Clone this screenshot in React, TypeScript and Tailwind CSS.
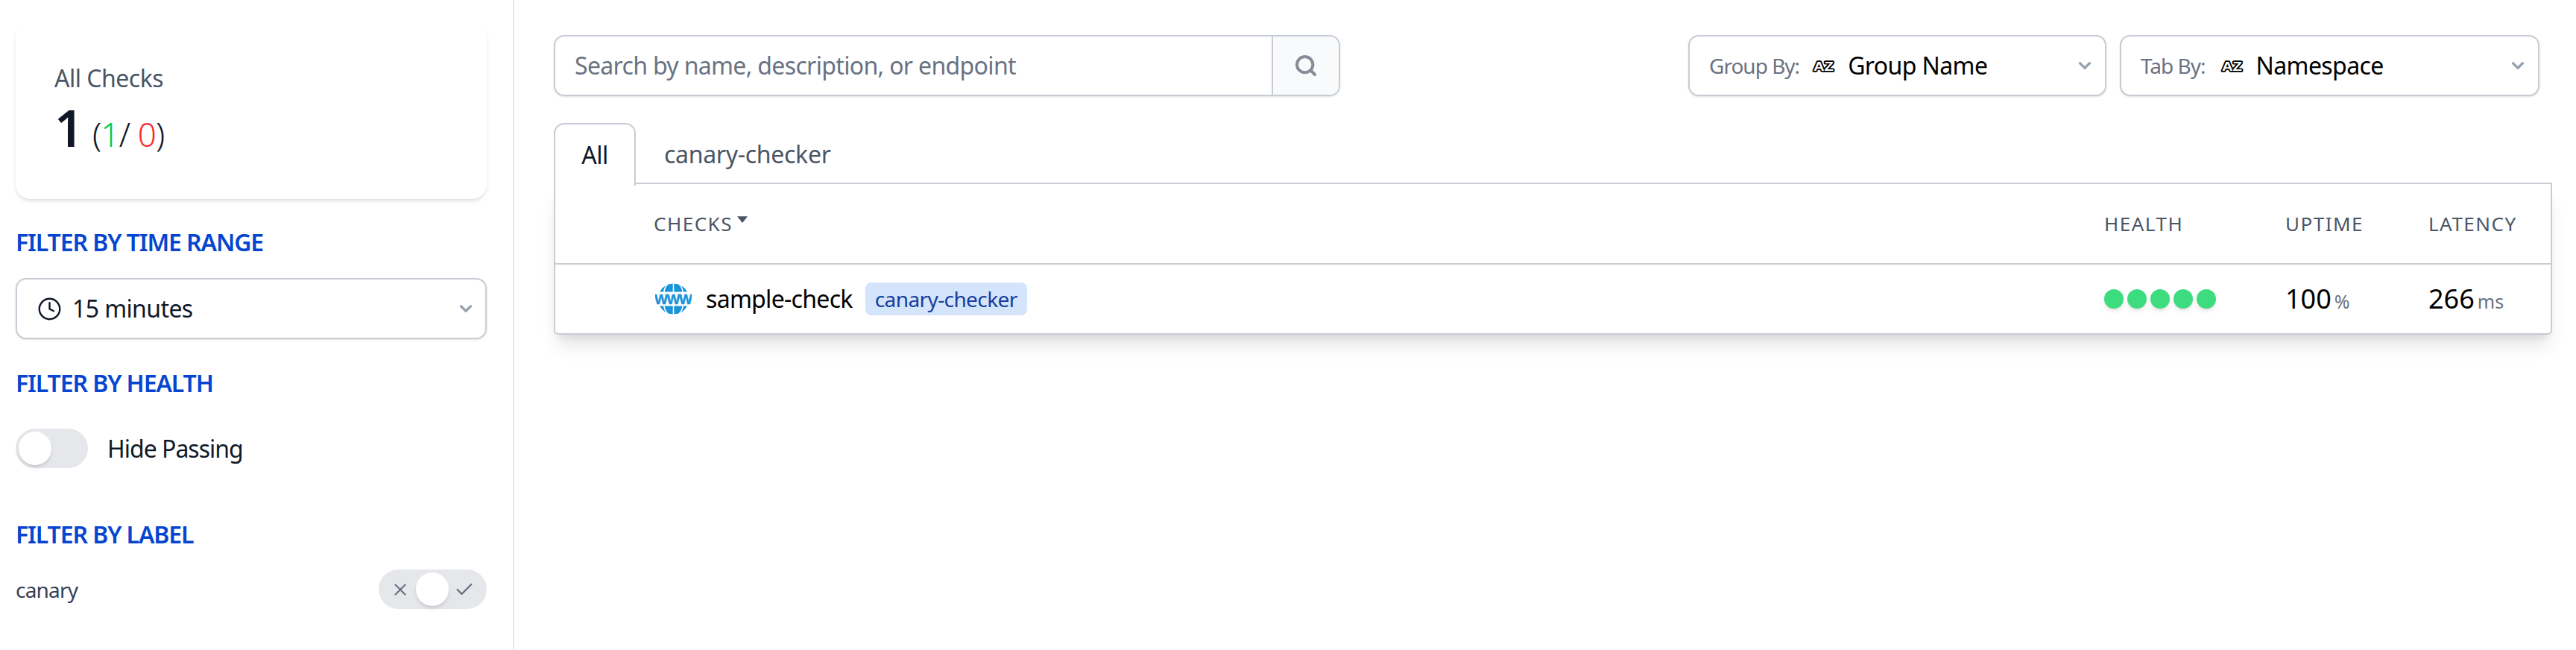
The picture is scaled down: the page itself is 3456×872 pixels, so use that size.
import { ChevronDown, Check, Clock, Search, X } from "lucide-react";

function WwwIcon() {
  return (
    <svg viewBox="0 0 49 42" className="w-[49px] h-[42px] shrink-0">
      <path d="M6 11.5 A21 21 0 0 1 43 11.5 Z" fill="#1a93d8" />
      <path d="M6 30.5 A21 21 0 0 0 43 30.5 Z" fill="#1a93d8" />
      <path d="M24.5 0V12M24.5 30V42M17 1Q12 6 12 12M32 1Q37 6 37 12M17 41Q12 36 12 30M32 41Q37 36 37 30" fill="none" stroke="#ffffff" strokeWidth="1.6" />
      <text y="28" fontSize="19" fontWeight="700" fill="#1a93d8" stroke="#1a93d8" strokeWidth="0.5" textAnchor="middle" fontFamily="Liberation Sans, sans-serif">
        <tspan x="8">W</tspan>
        <tspan x="24.5">W</tspan>
        <tspan x="41">W</tspan>
      </text>
    </svg>
  );
}

function AzIcon() {
  return (
    <svg viewBox="0 0 31 18" className="w-[31px] h-[18px] shrink-0">
      <text x="15.5" y="15.5" textAnchor="middle" fontSize="17" fontWeight="700" fill="#ffffff" stroke="#000000" strokeWidth="3.4" strokeLinejoin="round" paintOrder="stroke" fontFamily="Liberation Sans, sans-serif" textLength="27" lengthAdjust="spacingAndGlyphs">
        AZ
      </text>
    </svg>
  );
}

function SelectBox({ label, value, width, gap }: { label: string; value: string; width: string; gap: string }) {
  return (
    <div className={`${width} h-[82px] flex items-center pl-[26px] pr-[14px] bg-white border-2 border-[#c8cdd5] rounded-[14px] shadow-sm`}>
      <span className="text-[28px] tracking-[-1px] text-gray-500 whitespace-nowrap">{label}</span>
      <span className={gap}><AzIcon /></span>
      <span className="ml-[17px] text-[32px] tracking-[-0.6px] text-black whitespace-nowrap">{value}</span>
      <ChevronDown className="ml-auto w-[26px] h-[26px] text-gray-400" strokeWidth={3} />
    </div>
  );
}

function FilterHeading({ children, className }: { children: string; className: string }) {
  return <h3 className={`text-[32px] leading-[44px] tracking-[-1.1px] font-semibold text-[#0645cf] uppercase ${className}`}>{children}</h3>;
}

export default function App() {
  return (
    <div className="flex h-[872px] bg-white overflow-hidden font-['Noto_Sans',sans-serif]">
      <aside className="w-[690px] shrink-0 border-r-2 border-gray-200 pl-[21px] pr-[35px] pt-[29px]">
        <div className="h-[238px] rounded-[20px] bg-white shadow-md pl-[52px] pt-[56px]">
          <div className="text-[32px] leading-10 tracking-[-0.5px] text-gray-600">All Checks</div>
          <div className="flex items-baseline mt-2 text-gray-900">
            <span className="text-[68px] leading-[76px] font-semibold">1</span>
            <span className="ml-3 text-[44px] font-light tracking-[-0.8px]">
              (<span className="text-green-500">1</span>/ <span className="text-red-500">0</span>)
            </span>
          </div>
        </div>
        <FilterHeading className="mt-[36px]">Filter by time range</FilterHeading>
        <div className="mt-[26px] h-[82px] flex items-center pl-[27px] pr-[13px] border-2 border-[#c8cdd5] rounded-[14px] shadow-sm">
          <Clock className="w-[33px] h-[33px] text-gray-900" strokeWidth={1.75} />
          <span className="ml-[14px] text-[32px] tracking-[-0.6px] text-gray-900">15 minutes</span>
          <ChevronDown className="ml-auto w-[26px] h-[26px] text-gray-400" strokeWidth={3} />
        </div>
        <FilterHeading className="mt-[37px]">Filter by health</FilterHeading>
        <div className="mt-[39px] flex items-center h-[53px]">
          <div className="w-[97px] h-[53px] rounded-full bg-gray-200 p-1">
            <div className="w-[44px] h-[45px] rounded-full bg-white shadow-md" />
          </div>
          <span className="ml-[26px] text-[32px] tracking-[-1px] text-gray-900">Hide Passing</span>
        </div>
        <FilterHeading className="mt-[67px]">Filter by label</FilterHeading>
        <div className="mt-[25px] flex items-center justify-between">
          <span className="text-[28px] tracking-[-0.8px] text-gray-700">canary</span>
          <div className="relative w-[145px] h-[53px] rounded-full bg-gray-200 flex items-center justify-between px-[16px]">
            <X className="w-[26px] h-[26px] text-gray-500" strokeWidth={2} />
            <Check className="w-[28px] h-[28px] text-gray-500" strokeWidth={2} />
            <div className="absolute left-[50px] top-1 w-[44px] h-[45px] rounded-full bg-white shadow-md" />
          </div>
        </div>
      </aside>

      <main className="flex-1 pl-[53px] pr-[32px] pt-[47px]">
        <div className="flex items-center pr-[17px]">
          <div className="w-[1055px] h-[82px] flex border-2 border-[#c8cdd5] rounded-[14px] shadow-sm">
            <div className="flex-1 flex items-center pl-[26px] text-[32px] tracking-[-0.66px] text-gray-500">Search by name, description, or endpoint</div>
            <div className="w-[90px] flex items-center justify-center bg-gray-50 border-l-2 border-[#c8cdd5] rounded-r-[12px]">
              <Search className="w-[32px] h-[32px] text-[#868d99]" strokeWidth={3} />
            </div>
          </div>
          <div className="ml-auto flex gap-[18px]">
            <SelectBox label="Group By:" value="Group Name" width="w-[561px]" gap="ml-[17px]" />
            <SelectBox label="Tab By:" value="Namespace" width="w-[563px]" gap="ml-[20px]" />
          </div>
        </div>

        <div className="mt-[36px] flex h-[82px]">
          <div className="relative z-10 w-[110px] h-[84px] flex items-center justify-center bg-white border-2 border-b-0 border-[#c8cdd5] rounded-t-[14px] text-[32px] tracking-[-0.5px] text-gray-900">All</div>
          <div className="flex-1 flex items-center pl-[38px] pt-[3px] border-b-2 border-[#c8cdd5] text-[32px] tracking-[-0.3px] text-gray-600">canary-checker</div>
        </div>

        <div className="border-2 border-t-0 border-[#c8cdd5] shadow-xl rounded-b-md">
          <div className="h-[108px] flex items-center border-b-2 border-[#c8cdd5] pl-[132px] text-[26px] tracking-[1.5px] text-gray-600 uppercase">
            <div className="flex-1 flex items-center">
              Checks
              <svg viewBox="0 0 16 10" className="ml-[6px] w-[14px] h-[9px] -translate-y-1.5 fill-gray-600"><path d="M0 0H16L8 10Z" /></svg>
            </div>
            <div className="w-[243px]">Health</div>
            <div className="w-[192px]">Uptime</div>
            <div className="w-[164px]">Latency</div>
          </div>
          <div className="h-[92px] flex items-center pl-[134px]">
            <div className="flex-1 flex items-center">
              <WwwIcon />
              <span className="ml-[19px] text-[32px] tracking-[-0.7px] text-black">sample-check</span>
              <span className="ml-[17px] h-[44px] px-[13px] flex items-center rounded-[8px] bg-[#d3e4fb] text-[28px] tracking-[-0.6px] text-[#153e9f]">canary-checker</span>
            </div>
            <div className="w-[243px] flex gap-[5px]">
              {[0, 1, 2, 3, 4].map((i) => (
                <div key={i} className="w-[26px] h-[26px] rounded-full bg-[#3ddc7f] shadow-md" />
              ))}
            </div>
            <div className="w-[192px] flex items-baseline">
              <span className="text-[36px] text-black">100</span>
              <span className="ml-1 text-[25px] text-gray-500">%</span>
            </div>
            <div className="w-[164px] flex items-baseline">
              <span className="text-[36px] text-black">266</span>
              <span className="ml-1 text-[25px] text-gray-500">ms</span>
            </div>
          </div>
        </div>
      </main>
    </div>
  );
}
